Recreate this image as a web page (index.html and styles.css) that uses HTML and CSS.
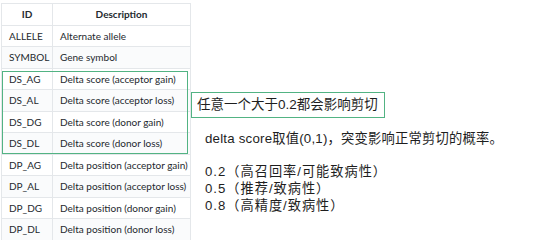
FILE: index.html
```html
<!DOCTYPE html>
<html lang="zh">
<head>
<meta charset="utf-8">
<link rel="stylesheet" href="styles.css">
</head>
<body>
<div class="page">
  <div class="table-wrap">
    <table class="vars">
      <colgroup><col class="col-id"><col class="col-desc"></colgroup>
      <thead>
        <tr><th>ID</th><th>Description</th></tr>
      </thead>
      <tbody>
        <tr><td>ALLELE</td><td>Alternate allele</td></tr>
        <tr><td>SYMBOL</td><td>Gene symbol</td></tr>
        <tr><td>DS_AG</td><td>Delta score (acceptor gain)</td></tr>
        <tr><td>DS_AL</td><td>Delta score (acceptor loss)</td></tr>
        <tr><td>DS_DG</td><td>Delta score (donor gain)</td></tr>
        <tr><td>DS_DL</td><td>Delta score (donor loss)</td></tr>
        <tr><td>DP_AG</td><td>Delta position (acceptor gain)</td></tr>
        <tr><td>DP_AL</td><td>Delta position (acceptor loss)</td></tr>
        <tr><td>DP_DG</td><td>Delta position (donor gain)</td></tr>
        <tr><td>DP_DL</td><td>Delta position (donor loss)</td></tr>
      </tbody>
    </table>
    <div class="highlight"></div>
  </div>
  <div class="notes">
    <div class="callout">任意一个大于0.2都会影响剪切</div>
    <p class="desc">delta score取值(0,1)，突变影响正常剪切的概率。</p>
    <ul class="levels">
      <li>0.2（高召回率/可能致病性）</li>
      <li>0.5（推荐/致病性）</li>
      <li>0.8（高精度/致病性）</li>
    </ul>
  </div>
</div>
</body>
</html>
```

FILE: styles.css
```css
html, body {
  margin: 0;
  padding: 0;
  background: #ffffff;
}

.page {
  display: flex;
  align-items: flex-start;
  width: 536px;
  height: 240px;
  overflow: hidden;
}

.table-wrap {
  position: relative;
  flex: none;
  margin: 3px 0 0 1px;
}

.vars {
  border-collapse: collapse;
  table-layout: fixed;
  width: 189px;
  font-family: "Lato", "Noto Sans", sans-serif;
  font-size: 10px;
  color: #24292e;
}

.col-id {
  width: 51px;
}

.col-desc {
  width: 138px;
}

.vars th,
.vars td {
  border: 1px solid #e4e7ea;
  height: 21.5px;
  padding: 0 0 0 7px;
  text-align: left;
  white-space: nowrap;
  overflow: hidden;
  box-sizing: border-box;
}

.vars th {
  font-weight: 700;
  text-align: center;
  padding: 0;
}

.vars tbody tr:nth-child(2n) {
  background: #fafbfc;
}

.highlight {
  position: absolute;
  left: 1px;
  top: 68px;
  width: 186px;
  height: 83px;
  border: 1.5px solid #52b383;
  box-sizing: border-box;
  pointer-events: none;
}

.notes {
  display: flex;
  flex-direction: column;
  color: #1e1e1e;
  font-family: "Liberation Sans", "Noto Sans CJK SC", sans-serif;
}

.callout {
  margin-top: 92px;
  width: 194px;
  height: 26px;
  box-sizing: border-box;
  border: 1.5px solid #52b383;
  padding: 0 0 0 5px;
  font-size: 13.5px;
  line-height: 24px;
  white-space: nowrap;
}

.desc {
  margin: 12px 0 0 14px;
  font-size: 13.3px;
  line-height: 17px;
  letter-spacing: 0.2px;
  white-space: nowrap;
}

.levels {
  list-style: none;
  margin: 16px 0 0 14px;
  padding: 0;
  font-size: 13.2px;
  line-height: 17px;
  letter-spacing: 1px;
}

.levels li {
  height: 17px;
  white-space: nowrap;
}
```
